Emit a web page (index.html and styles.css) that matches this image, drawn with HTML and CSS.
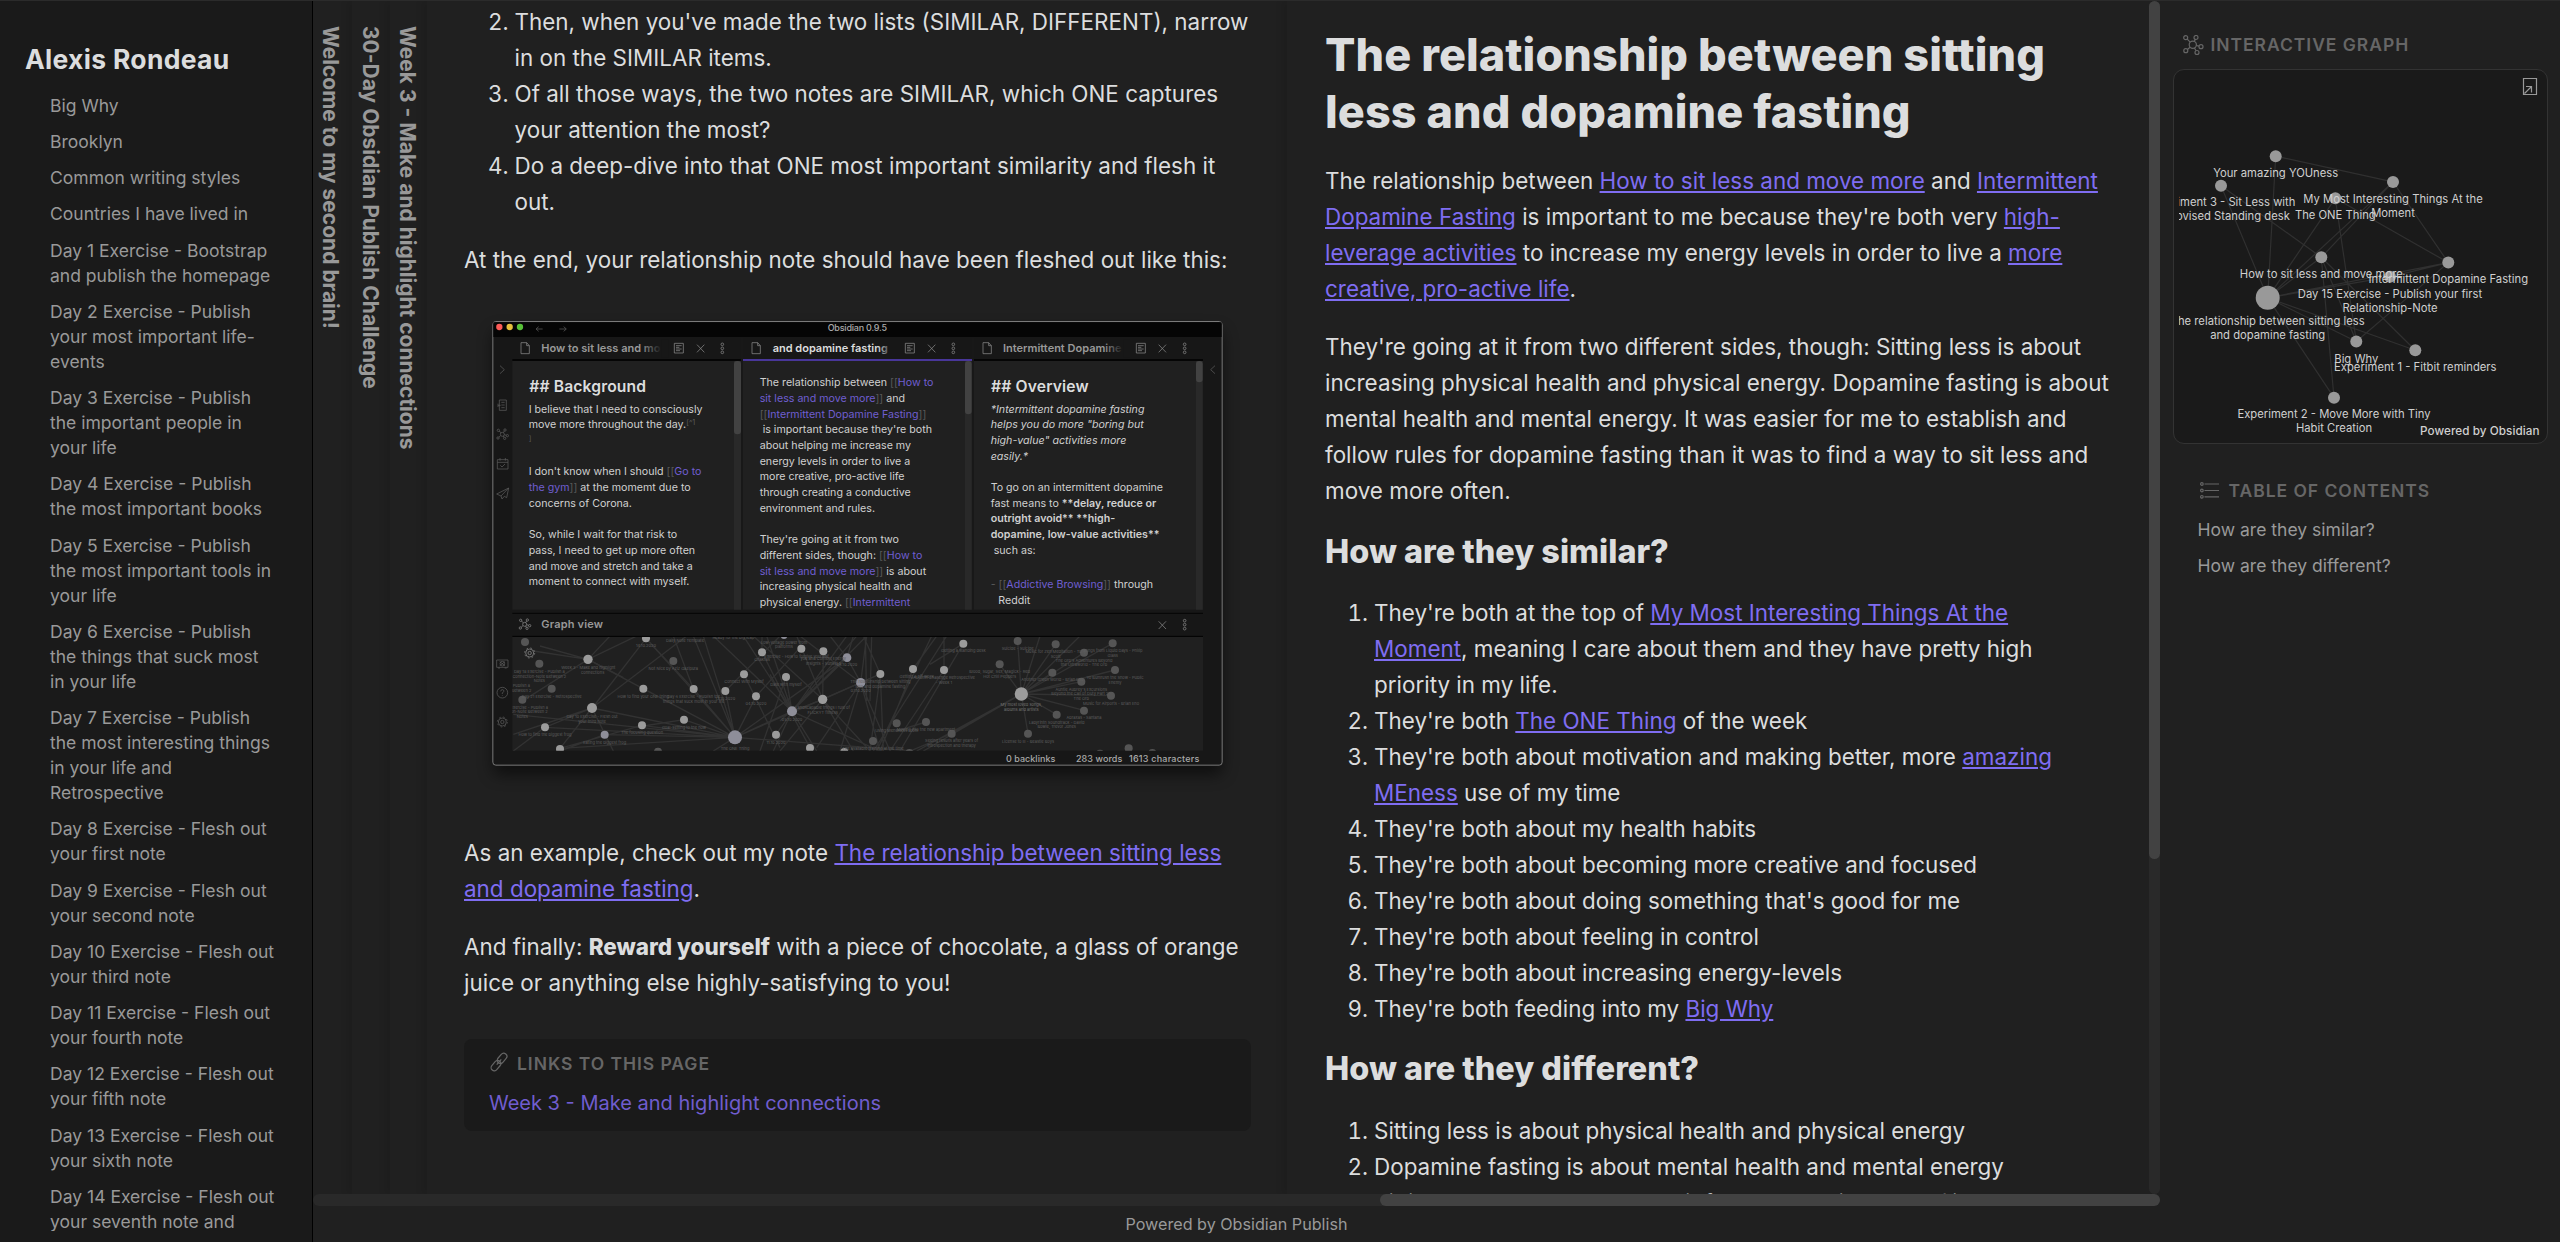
FILE: index.html
```html
<!DOCTYPE html>
<html lang="en">
<head>
<meta charset="utf-8">
<title>Alexis Rondeau</title>
<link rel="stylesheet" href="styles.css">
</head>
<body>
<div class="app">
  <aside class="sidebar">
    <h2 class="site-title">Alexis Rondeau</h2>
    <nav class="nav">
      <a>Big Why</a>
      <a>Brooklyn</a>
      <a>Common writing styles</a>
      <a>Countries I have lived in</a>
      <a>Day 1 Exercise - Bootstrap and publish the homepage</a>
      <a>Day 2 Exercise - Publish your most important life-events</a>
      <a>Day 3 Exercise - Publish the important people in your life</a>
      <a>Day 4 Exercise - Publish the most important books</a>
      <a>Day 5 Exercise - Publish the most important tools in your life</a>
      <a>Day 6 Exercise - Publish the things that suck most in your life</a>
      <a>Day 7 Exercise - Publish the most interesting things in your life and Retrospective</a>
      <a>Day 8 Exercise - Flesh out your first note</a>
      <a>Day 9 Exercise - Flesh out your second note</a>
      <a>Day 10 Exercise - Flesh out your third note</a>
      <a>Day 11 Exercise - Flesh out your fourth note</a>
      <a>Day 12 Exercise - Flesh out your fifth note</a>
      <a>Day 13 Exercise - Flesh out your sixth note</a>
      <a>Day 14 Exercise - Flesh out your seventh note and</a>
    </nav>
  </aside>

  <main class="center">
    <div class="panes">
      <section class="stacked first"><span>Welcome to my second brain!</span></section>
      <section class="stacked"><span>30-Day Obsidian Publish Challenge</span></section>
      <section class="stacked"><span>Week 3 - Make and highlight connections</span></section>

      <article class="note note-exercise">
        <ol start="2">
          <li>Then, when you've made the two lists (SIMILAR, DIFFERENT), narrow in on the SIMILAR items.</li>
          <li>Of all those ways, the two notes are SIMILAR, which ONE captures your attention the most?</li>
          <li>Do a deep-dive into that ONE most important similarity and flesh it out.</li>
        </ol>
        <p>At the end, your relationship note should have been fleshed out like this:</p>
        <figure class="shot">
          <svg viewBox="-48 0 2364 1536">
            <defs>
              <clipPath id="graphClip"><rect x="97" y="1008" width="2072" height="341"/></clipPath>
              <clipPath id="noteClip"><rect x="97" y="180" width="2072" height="746"/></clipPath>
              <linearGradient id="fadeTab"><stop offset="0" stop-color="#171717" stop-opacity="0"/><stop offset="1" stop-color="#171717"/></linearGradient>
              <filter id="soft" x="-10%" y="-10%" width="120%" height="125%"><feGaussianBlur stdDeviation="24"/></filter>
            </defs>
            <rect x="40" y="90" width="2186" height="1330" rx="14" fill="#000" opacity=".55" filter="url(#soft)"/>
            <rect x="38.500" y="61.500" width="2188" height="1331" rx="9" fill="#171717" stroke="#7a7a7a" stroke-width="3"/>
            <rect x="40" y="64" width="2185" height="44" fill="#050505"/>
            <circle cx="58" cy="78" r="9.500" fill="#fc5b57"/><circle cx="89" cy="78" r="9.500" fill="#e5bf3c"/><circle cx="120" cy="78" r="9.500" fill="#57c038"/>
            <g class="line dim"><path d="M188 84H169M176 77l-8 7 8 7M238 84h20M251 77l8 7-8 7"/></g>
            <text class="t mid" x="1043" y="91" font-size="26" textLength="178">Obsidian 0.9.5</text>

            <rect x="97" y="180" width="2072" height="746" fill="#202020"/>
            <path d="M97 177H783M1482 177H2169" stroke="#000" stroke-width="5"/>
            <path d="M789 177H1476" stroke="#483699" stroke-width="6"/>
            <path d="M786 110V928M1479 110V928" stroke="#181818" stroke-width="6"/>
            <rect x="762" y="180" width="21" height="746" fill="#292929"/><rect x="762" y="180" width="21" height="220" rx="10" fill="#424242"/>
            <rect x="1455" y="180" width="20" height="746" fill="#292929"/><rect x="1455" y="180" width="20" height="160" rx="10" fill="#424242"/>
            <rect x="2148" y="180" width="20" height="746" fill="#292929"/><rect x="2148" y="180" width="20" height="64" rx="10" fill="#424242"/>

            <g class="line">
              <path d="M123 125h17l8 9v24h-25zM140 125v9h8M816 125h17l8 9v24h-25zM833 125v9h8M1509 125h17l8 9v24h-25zM1526 125v9h8"/>
              <path d="M583 127h27v29h-27zM588 134h17M588 139h10M588 144h17M588 149h12M1276 127h27v29h-27zM1281 134h17M1281 139h10M1281 144h17M1281 149h12M1969 127h27v29h-27zM1974 134h17M1974 139h10M1974 144h17M1974 149h12"/>
              <path d="M651 131l22 23M673 131l-22 23M1344 131l22 23M1366 131l-22 23M2036 131l22 23M2058 131l-22 23M2036 961l22 23M2058 961l-22 23"/>
              <g id="dots"><circle cx="727" cy="130" r="4"/><circle cx="727" cy="142" r="4"/><circle cx="727" cy="154" r="4"/></g>
              <use href="#dots" x="693"/><use href="#dots" x="1387"/><use href="#dots" x="1387" y="829"/>
            </g>
            <text class="t tab" x="184" y="153">How to sit less and mo</text>
            <text class="t tab on" x="878" y="153">and dopamine fasting</text>
            <text class="t tab" x="1569" y="153">Intermittent Dopamine</text>
            <rect x="480" y="115" width="65" height="55" fill="url(#fadeTab)"/><rect x="545" y="115" width="20" height="55" fill="#171717"/>
            <rect x="1190" y="115" width="50" height="55" fill="url(#fadeTab)"/>
            <rect x="1870" y="115" width="60" height="55" fill="url(#fadeTab)"/><rect x="1930" y="115" width="20" height="55" fill="#171717"/>

            <g class="line dim">
              <path d="M60 194l13 12-13 12M2205 194l-13 12 13 12"/>
              <path d="M58 297h21v31H58zM64 304h10M64 312h10M64 320h10M54 308v10M54 313h8"/>
              <path d="M52 476h32v28H52zM52 484h32M60 471v8M76 471v8M61 493l5 5 9-9"/>
              <path d="M86 561L50 579l13 6 3 9 7-8 7 4zM86 561L63 585"/>
              <path d="M50 1077h34v22H50zM54 1101h6M74 1101h6M59 1082l16 12M75 1082l-16 12"/><circle cx="67" cy="1088" r="7"/>
              <circle cx="67" cy="1175" r="16"/><path d="M62 1171q1-6 6-5 6 2 3 6l-4 4v3M67 1182v2"/>
              <g id="gear"><circle cx="67" cy="1263" r="5"/><circle cx="67" cy="1263" r="12"/><circle cx="67" cy="1263" r="15" stroke-dasharray="5 6.800"/></g>
              <g id="net"><circle cx="67" cy="400" r="6"/><circle cx="55" cy="388" r="3.500"/><circle cx="75" cy="387" r="3.500"/><circle cx="82" cy="404" r="3.500"/><circle cx="54" cy="411" r="3.500"/><circle cx="74" cy="412" r="3.500"/><path d="M57 390l6 5M73 390l-3 5M73 401l6 2M57 408l5-4M70 405l2 4"/></g>
            </g>

            <g class="t" clip-path="url(#noteClip)">
              <text class="head" x="148" y="273" textLength="350">## Background</text>
              <text x="146" y="335">I believe that I need to consciously</text>
              <text x="146" y="382">move more throughout the day.<tspan class="br" font-size="22" dy="-10">[^1</tspan></text>
              <text class="br" x="146" y="420" font-size="22">]</text>
              <text x="146" y="523">I don't know when I should <tspan class="br">[[</tspan><tspan class="lk">Go to</tspan></text>
              <text x="146" y="570"><tspan class="lk">the gym</tspan><tspan class="br">]]</tspan> at the momemt due to</text>
              <text x="146" y="617">concerns of Corona.</text>
              <text x="146" y="711">So, while I wait for that risk to</text>
              <text x="146" y="759">pass, I need to get up more often</text>
              <text x="146" y="806">and move and stretch and take a</text>
              <text x="146" y="853">moment to connect with myself.</text>

              <text x="839" y="255">The relationship between <tspan class="br">[[</tspan><tspan class="lk">How to</tspan></text>
              <text x="839" y="303"><tspan class="lk">sit less and move more</tspan><tspan class="br">]]</tspan> and</text>
              <text x="839" y="350"><tspan class="br">[[</tspan><tspan class="lk">Intermittent Dopamine Fasting</tspan><tspan class="br">]]</tspan></text>
              <text x="848" y="397">is important because they're both</text>
              <text x="839" y="444">about helping me increase my</text>
              <text x="839" y="491">energy levels in order to live a</text>
              <text x="839" y="538">more creative, pro-active life</text>
              <text x="839" y="585">through creating a conductive</text>
              <text x="839" y="633">environment and rules.</text>
              <text x="839" y="727">They're going at it from two</text>
              <text x="839" y="774">different sides, though: <tspan class="br">[[</tspan><tspan class="lk">How to</tspan></text>
              <text x="839" y="821"><tspan class="lk">sit less and move more</tspan><tspan class="br">]]</tspan> is about</text>
              <text x="839" y="868">increasing physical health and</text>
              <text x="839" y="915">physical energy. <tspan class="br">[[</tspan><tspan class="lk">Intermittent</tspan></text>

              <text class="head" x="1533" y="273" textLength="293">## Overview</text>
              <g font-style="italic">
                <text x="1532" y="335">*Intermittent dopamine fasting</text>
                <text x="1532" y="382">helps you do more "boring but</text>
                <text x="1532" y="429">high-value" activities more</text>
                <text x="1532" y="476">easily.*</text>
              </g>
              <text x="1532" y="570">To go on an intermittent dopamine</text>
              <text x="1532" y="617">fast means to <tspan font-weight="600">**delay, reduce or</tspan></text>
              <text x="1532" y="664" font-weight="600">outright avoid** **high-</text>
              <text x="1532" y="711" font-weight="600">dopamine, low-value activities**</text>
              <text x="1541" y="759">such as:</text>
              <text x="1532" y="862"><tspan class="br">- [[</tspan><tspan class="lk">Addictive Browsing</tspan><tspan class="br">]]</tspan> through</text>
              <text x="1555" y="909">Reddit</text>
            </g>

            <path d="M97 937H2169" stroke="#050505" stroke-width="3"/>
            <g class="line"><use href="#net" x="67" y="570"/></g>
            <text class="t tab" x="184" y="981" textLength="185">Graph view</text>
            <rect x="97" y="1006" width="2072" height="343" fill="#202020"/>
            <path d="M97 1006H2169" stroke="#000" stroke-width="3"/>

            <g clip-path="url(#graphClip)">
              <g stroke="#323232" stroke-width="4" fill="none">
                <path d="M765 1309L324 1075M765 1309L336 1221M765 1309L195 1279M765 1309L374 1301M765 1309L486 1273M765 1309L612 1256M765 1309L490 1163M765 1309L641 1164M765 1309L736 1170M765 1309L828 1186M765 1309L936 1231M765 1309L1142 1145M765 1309L1101 1070M765 1309L1028 1195M765 1309L240 1342M765 1309L100 1240M765 1309L498 1012M765 1309L1300 1350M765 1309L700 1350M765 1309L640 1005M765 1309L670 1005"/>
                <path d="M324 1075L180 1035M324 1075L160 1050M324 1075L120 1205M324 1075L390 1005M324 1075L470 1005M324 1075L430 1130M498 1012L330 1230M498 1012L640 1164M336 1221L620 1005M336 1221L100 1300M336 1221L240 1342M336 1221L400 1350M195 1279L100 1350M195 1279L336 1221M374 1301L240 1350M486 1273L240 1342M612 1256L490 1275"/>
                <path d="M936 1231L700 1005M936 1231L790 1005M936 1231L860 1005M936 1231L880 1350M936 1231L1010 1350M936 1231L1130 1005M936 1231L1160 1005M936 1231L1101 1070M936 1231L1028 1195M936 1231L846 1054M936 1231L918 1128M936 1231L1200 1350M1028 1195L820 1005M1028 1195L950 1005M1028 1195L1142 1145M1028 1195L1200 1119M1028 1195L900 1350M1028 1195L1120 1350M1028 1195L1170 1350"/>
                <path d="M1142 1145L960 1005M1142 1145L1101 1070L1050 1005M1142 1145L1201 1119M1142 1145L1200 1350M1142 1145L1080 1350M1142 1145L1160 1005M1142 1145L1230 1350M1142 1145L1010 1340M1101 1070L1120 1005M1101 1070L900 1260M1201 1119L1150 1005M1201 1119L1170 1350M1201 1119L1210 1350M1299 1104L1200 1350M1299 1104L1370 1005M1392 1107V1005M1392 1107L1230 1350M1450 1028L1260 1350M1450 1028L1350 1090M1355 1005L1190 1350M1400 1005L1180 1350M846 1054V1005M918 1128L840 1350M640 1164L580 1005M736 1170L900 1005M792 1120L900 1340M828 1186L960 1040M1028 1195L1030 1050M888 1300L1100 1005M990 1340L870 1120M1160 1200L1156 1005M1170 1200L1175 1005"/>
                <path d="M1624 1179L1613 1020M1624 1179L1559 1090M1624 1179L1727 1030M1624 1179L1680 1005M1624 1179L1800 1005M1624 1179L1812 1055M1624 1179L1898 1027M1624 1179L1905 1107M1624 1179L1717 1115M1624 1179L1804 1142M1624 1179L1893 1184M1624 1179L1812 1228M1624 1179L1730 1241M1624 1179L1644 1298M1624 1179L1415 1298M1624 1179L1330 1350M1624 1179L1310 1350M1415 1298L1290 1350M1338 1263L1250 1290"/>
              </g>
              <g fill="#555">
                <circle cx="135" cy="1023" r="12"/><circle cx="580" cy="1080" r="12"/><circle cx="215" cy="1163" r="12"/><circle cx="127" cy="1196" r="12"/><circle cx="178" cy="1088" r="12"/><circle cx="534" cy="1352" r="12"/><circle cx="1613" cy="1020" r="12"/><circle cx="1559" cy="1090" r="12"/><circle cx="1727" cy="1030" r="12"/><circle cx="1812" cy="1055" r="12"/><circle cx="1898" cy="1027" r="12"/><circle cx="1717" cy="1115" r="12"/><circle cx="1905" cy="1107" r="12"/><circle cx="1804" cy="1142" r="12"/><circle cx="1893" cy="1184" r="12"/><circle cx="1812" cy="1229" r="12"/><circle cx="1730" cy="1241" r="12"/><circle cx="1644" cy="1298" r="12"/><circle cx="1250" cy="1267" r="12"/><circle cx="1338" cy="1263" r="12"/><circle cx="1415" cy="1298" r="12"/><circle cx="1179" cy="1320" r="12"/><circle cx="1946" cy="1342" r="12"/><circle cx="2017" cy="1356" r="12"/><circle cx="1860" cy="1358" r="12"/><circle cx="1288" cy="1356" r="12"/>
              </g>
              <g fill="#9b9b9b">
                <circle cx="498" cy="1012" r="12"/><circle cx="324" cy="1075" r="14"/><circle cx="490" cy="1163" r="12"/><circle cx="641" cy="1164" r="12"/><circle cx="736" cy="1170" r="12"/><circle cx="792" cy="1120" r="12"/><circle cx="828" cy="1186" r="12"/><circle cx="918" cy="1128" r="12"/><circle cx="846" cy="1054" r="12"/><circle cx="964" cy="1043" r="12"/><circle cx="1030" cy="1051" r="12"/><circle cx="336" cy="1221" r="15"/><circle cx="195" cy="1279" r="12"/><circle cx="486" cy="1273" r="12"/><circle cx="612" cy="1256" r="12"/><circle cx="240" cy="1344" r="12"/><circle cx="1028" cy="1195" r="14"/><circle cx="888" cy="1301" r="12"/><circle cx="990" cy="1341" r="12"/><circle cx="1093" cy="1353" r="12"/><circle cx="1201" cy="1119" r="12"/><circle cx="1299" cy="1104" r="12"/><circle cx="1392" cy="1107" r="12"/><circle cx="1450" cy="1028" r="12"/><circle cx="1624" cy="1179" r="20"/>
              </g>
              <g fill="#8e8e99"><circle cx="765" cy="1309" r="21"/><circle cx="936" cy="1231" r="15"/><circle cx="1142" cy="1145" r="14"/><circle cx="1101" cy="1070" r="13"/><circle cx="374" cy="1301" r="12"/><circle cx="912" cy="1004" r="10"/></g>
              <g class="tiny">
                <text x="498" y="1038">14.10.2020</text><text x="615" y="1023">Daily Note Template</text><text x="760" y="1013">Ready for the big leap</text>
                <text x="325" y="1105">Week 3 - Make and highlight</text><text x="338" y="1119">connections</text>
                <text x="580" y="1107">Not Nice by Aziz Gazipura</text>
                <text x="178" y="1116">Day 18 Exercise - Publish a</text><text x="178" y="1130">Connection-Note Between 2</text><text x="178" y="1144">Notes</text>
                <text x="215" y="1190">Day 21 Exercise - Retrospective</text>
                <text x="148" y="1223">Exercise - Publish a</text><text x="148" y="1237">on-Note Between 2</text><text x="127" y="1251">Notes</text>
                <text x="124" y="1158">Publish a</text><text x="124" y="1172">Between 2</text>
                <text x="490" y="1190">How to find your ONE thing</text><text x="641" y="1190">Day 6 Exercise - Publish the</text><text x="641" y="1205">things that suck most in your life</text>
                <text x="736" y="1196">13.10.2020</text><text x="792" y="1146">Connect With Myself</text><text x="828" y="1213">04.10.2020</text><text x="918" y="1154">Date with myself</text>
                <text x="846" y="1080">Chakras</text><text x="912" y="1028">Low-voltage power from</text><text x="912" y="1042">platforms</text>
                <text x="950" y="1070">Exercise - How to forgive yourself</text><text x="1030" y="1077">you and Content Energy</text><text x="1030" y="1091">Insights - Sunset 1</text><text x="1101" y="1096">06.10.2020</text>
                <text x="336" y="1251">Day 10 Exercise - Flesh out</text><text x="336" y="1265">your third note</text><text x="195" y="1306">How to find the biggest frog</text><text x="374" y="1328">Eating the biggest frog</text>
                <text x="486" y="1299">The focusing question</text><text x="612" y="1283">Goal-setting to the now</text><text x="765" y="1347">The ONE Thing</text>
                <text x="936" y="1260">05.10.2020</text><text x="1028" y="1225">Landscapable things I rule of</text><text x="1028" y="1239">FLICKYT fitness</text><text x="888" y="1328">11.10.2020</text>
                <text x="1201" y="1145">The relationship between sitting</text><text x="1201" y="1160">less and dopamine fasting</text><text x="1142" y="1172">07.10.2020</text>
                <text x="1310" y="1131">Getting a 2ff week</text><text x="1392" y="1134">Autumn Challenge Retrospective</text><text x="1392" y="1148">- Week 1</text><text x="1450" y="1054">Getting a standing desk</text>
                <text x="1250" y="1293">Using MeneNess room</text><text x="1338" y="1290">Moving into the new apartment</text><text x="1415" y="1324">Seeing results after years of</text><text x="1415" y="1338">introspection and therapy</text><text x="1179" y="1346">The available training at the time</text>
                <text x="1613" y="1046">Suicide - Suicide</text><text x="1727" y="1056">Music for Zen Meditation - Tony</text><text x="1727" y="1070">Scott</text><text x="1898" y="1054">Songs from Liquid Days - Philip</text><text x="1898" y="1068">Glass</text>
                <text x="1812" y="1082">The Orb's Adventures Beyond</text><text x="1812" y="1095">the Ultraworld - The Orb</text><text x="1559" y="1116">Blood, Sugar, Sex, Magick - Red</text><text x="1559" y="1131">Hot Chili Peppers</text>
                <text x="1717" y="1141">Another Green World - Brian Eno</text><text x="1905" y="1134">Yo Bumrush the Show - Public</text><text x="1905" y="1148">Enemy</text>
                <text x="1804" y="1169">Auntie Aubrey's Excursions</text><text x="1804" y="1183">Beyond the Call of Duty Part 2 -</text><text x="1804" y="1197">The Orb</text><text x="1893" y="1211">Music for Airports - Brian Eno</text>
                <text x="1624" y="1215" fill="#777">My most loved songs,</text><text x="1624" y="1231" fill="#777">albums and artists</text><text x="1812" y="1255">Abraxas - Santana</text>
                <text x="1730" y="1268">Labyrinth Soundtrack - David</text><text x="1730" y="1282">Bowie, Trevor Jones</text><text x="1644" y="1325">License to Ill - Beastie Boys</text>
              </g>
              <g class="line"><use href="#gear" x="82" y="-207"/></g>
            </g>
            <g class="t mid" font-size="27">
              <text x="1578" y="1383" textLength="148">0 backlinks</text><text x="1788" y="1383" textLength="139">283 words</text><text x="1947" y="1383" textLength="211">1613 characters</text>
            </g>
          </svg>
        </figure>
        <p>As an example, check out my note <a>The relationship between sitting less and dopamine fasting</a>.</p>
        <p>And finally: <strong>Reward yourself</strong> with a piece of chocolate, a glass of orange juice or anything else highly-satisfying to you!</p>
        <section class="backlinks">
          <h4 class="label">
            <svg class="ico-link" viewBox="0 0 20 20"><g transform="rotate(-50 10 10)"><rect x="-.5" y="6.800" width="11.500" height="6.400" rx="3.200"/><rect x="9" y="6.800" width="11.500" height="6.400" rx="3.200"/><path d="M6.500 10h7"/></g></svg>
            LINKS TO THIS PAGE
          </h4>
          <a>Week 3 - Make and highlight connections</a>
        </section>
      </article>

      <article class="note note-relation">
        <h1>The relationship between sitting less and dopamine fasting</h1>
        <p>The relationship between <a>How to sit less and move more</a> and <a>Intermittent Dopamine Fasting</a> is important to me because they're both very <a>high-leverage activities</a> to increase my energy levels in order to live a <a>more creative, pro-active life</a>.</p>
        <p>They're going at it from two different sides, though: Sitting less is about increasing physical health and physical energy. Dopamine fasting is about mental health and mental energy. It was easier for me to establish and follow rules for dopamine fasting than it was to find a way to sit less and move more often.</p>
        <h2>How are they similar?</h2>
        <ol>
          <li>They're both at the top of <a>My Most Interesting Things At the Moment</a>, meaning I care about them and they have pretty high priority in my life.</li>
          <li>They're both <a>The ONE Thing</a> of the week</li>
          <li>They're both about motivation and making better, more <a>amazing MEness</a> use of my time</li>
          <li>They're both about my health habits</li>
          <li>They're both about becoming more creative and focused</li>
          <li>They're both about doing something that's good for me</li>
          <li>They're both about feeling in control</li>
          <li>They're both about increasing energy-levels</li>
          <li>They're both feeding into my <a>Big Why</a></li>
        </ol>
        <h2>How are they different?</h2>
        <ol>
          <li>Sitting less is about physical health and physical energy</li>
          <li>Dopamine fasting is about mental health and mental energy</li>
          <li>Sitting less needs to be a habit from the environment (like</li>
        </ol>
      </article>
      <div class="vscroll"><i></i></div>
    </div>
    <div class="hscroll"><i></i></div>
    <footer class="footer">Powered by Obsidian Publish</footer>
  </main>

  <aside class="right">
    <h4 class="label graph-label">
      <svg class="ico-net" viewBox="0 0 21 21"><circle cx="9.800" cy="9.800" r="3.600"/><circle cx="2.700" cy="2.700" r="2"/><circle cx="13" cy="2.500" r="2"/><circle cx="18" cy="11.700" r="2"/><circle cx="2.800" cy="15.700" r="2"/><circle cx="14" cy="17.500" r="2"/><path d="M4.200 4.100l3 3M12.300 4.400l-1.100 2.200M13.300 10.500l2.700.7M4.400 14.500l2.600-2.300M11.400 13l1.700 2.700"/></svg>
      INTERACTIVE GRAPH
    </h4>
    <div class="graph">
      <svg viewBox="2174 69.500 373 373">
        <defs><clipPath id="labels"><rect x="2179" y="70" width="364" height="372"/></clipPath></defs>
        <path class="edges" d="M2275.700 155.700L2393 181.400M2275.700 155.700L2267.700 297.300M2221 185.200L2267.700 297.300M2221 185.200L2321.300 256.800M2393 181.400L2267.700 297.300M2393 181.400L2321.300 256.800M2393 181.400L2448.300 262.100M2335.300 197.800L2267.700 297.300M2335.300 197.800L2448.300 262.100M2335.300 197.800L2356.300 341M2321.300 256.800L2267.700 297.300M2321.300 256.800L2356.300 341M2321.300 256.800L2415.300 349.800M2321.300 256.800L2334 397.200M2267.700 297.300L2448.300 262.100M2267.700 297.300L2390 276.300M2267.700 297.300L2356.300 341M2267.700 297.300L2415.300 349.800M2267.700 297.300L2334 397.200M2448.300 262.100L2356.300 341M2390 276.300L2448.300 262.100"/>
        <g fill="#999"><circle cx="2275.700" cy="155.700" r="6"/><circle cx="2221" cy="185.200" r="6"/><circle cx="2393" cy="181.400" r="6"/><circle cx="2335.300" cy="197.800" r="6"/><circle cx="2321.300" cy="256.800" r="6"/><circle cx="2448.300" cy="262.100" r="6"/><circle cx="2390" cy="276.300" r="6"/><circle cx="2267.700" cy="297.300" r="12"/><circle cx="2356.300" cy="341" r="6"/><circle cx="2415.300" cy="349.800" r="6"/><circle cx="2334" cy="397.200" r="6"/></g>
        <g class="names" clip-path="url(#labels)">
          <text x="2275.700" y="176">Your amazing YOUness</text>
          <text x="2221" y="205.500">Experiment 3 - Sit Less with</text><text x="2221" y="219.800">Improvised Standing desk</text>
          <text x="2393" y="202">My Most Interesting Things At the</text><text x="2393" y="216.300">Moment</text>
          <text x="2335.300" y="218">The ONE Thing</text>
          <text x="2321.300" y="277.500">How to sit less and move more</text>
          <text x="2448.300" y="282.600">Intermittent Dopamine Fasting</text>
          <text x="2390" y="297">Day 15 Exercise - Publish your first</text><text x="2390" y="311.300">Relationship-Note</text>
          <text x="2267.700" y="324">The relationship between sitting less</text><text x="2267.700" y="338.200">and dopamine fasting</text>
          <text x="2356.300" y="362">Big Why</text>
          <text x="2415.300" y="370">Experiment 1 - Fitbit reminders</text>
          <text x="2334" y="417.500">Experiment 2 - Move More with Tiny</text><text x="2334" y="431.800">Habit Creation</text>
        </g>
        <text class="powered" x="2420" y="434" textLength="119.500">Powered by Obsidian</text>
        <path class="expand" d="M2523.500 78h13v16h-13zM2524.500 93l7-7M2526 86h5.500v6"/>
      </svg>
    </div>
    <h4 class="label toc-label">
      <svg class="ico-toc" viewBox="0 0 20 18"><circle cx="1.900" cy="2" r="1.300"/><circle cx="1.900" cy="8.500" r="1.300"/><circle cx="1.900" cy="14.800" r="1.300"/><path d="M4.500 2H19M4.500 8.500H19M4.500 14.800H19"/></svg>
      TABLE OF CONTENTS
    </h4>
    <nav class="toc"><a>How are they similar?</a><a>How are they different?</a></nav>
  </aside>
</div>
</body>
</html>
```
FILE: styles.css
```css
* { box-sizing: border-box; }
html, body { margin: 0; height: 100%; }
body {
  background: #202020;
  color: #dcddde;
  font-family: Inter, "Open Sans", sans-serif;
  font-size: 22.45px;
  line-height: 36px;
  overflow: hidden;
}
.app {
  display: grid;
  grid-template-columns: 313px 1847px 1fr;
  height: 1242px;
  border-top: 1px solid #2b2b2b;
}

/* left navigation */
.sidebar {
  display: flex;
  flex-direction: column;
  background: #1a1a1a;
  border-right: 1px solid #000;
  padding: 40px 0 11px 25px;
  min-height: 0;
}
.site-title {
  margin: 0 0 15.5px;
  font-size: 26.5px;
  font-weight: 700;
  letter-spacing: 0.3px;
  line-height: 36px;
}
.nav {
  display: flex;
  flex-direction: column;
  flex: 1;
  gap: 11.25px;
  min-height: 0;
  overflow: hidden;
  width: 252px;
  padding-left: 25px;
  font-size: 17.55px;
  line-height: 25px;
  color: #999;
}
.nav a { flex: none; }

/* sliding panes */
.center {
  display: grid;
  grid-template-rows: 1193px 12px 1fr;
  min-height: 0;
}
.panes { display: flex; overflow: hidden; }
.stacked, .note { flex: none; background: #202020; }
.stacked + .stacked, .note { box-shadow: -6px 0 6px rgba(0, 0, 0, .08); }
.stacked {
  width: 37.5px;
  padding-top: 25px;
  color: #999;
  font-size: 21px;
  font-weight: 700;
}
.stacked.first { width: 39px; }
.stacked span {
  display: block;
  writing-mode: vertical-rl;
  line-height: 34.7px;
  white-space: nowrap;
}
.stacked.first span { line-height: 34px; }
.note { width: 860px; padding: 0 35px 0 37px; overflow: hidden; }
.note-relation { width: 862px; padding-left: 38px; padding-right: 36px; }
.note-exercise { padding-top: 2.5px; }
.note-relation { padding-top: 25px; }
.note p, .note ol { margin: 0 0 22.5px; }
.note ol { padding-left: 50.5px; }
.note-relation ol { padding-left: 49px; padding-right: 12px; }
.note a { color: #7f6df2; text-decoration: underline; }
.note strong { font-weight: 800; }
.note h1 {
  margin: 0 0 22.5px;
  font-size: 45px;
  font-weight: 800;
  letter-spacing: .07px;
  line-height: 57px;
}
.note h2 {
  margin: 0 0 23.3px;
  font-size: 32.4px;
  font-weight: 800;
  line-height: 40px;
}
.shot { margin: 0 0 22.5px; height: 511.5px; }
.shot svg { display: block; width: 788px; height: 512px; }

.backlinks {
  width: 787px;
  height: 92px;
  margin-top: 38px;
  padding: 7px 25px;
  background: #1a1a1a;
  border-radius: 8px;
}
.note .backlinks a {
  display: block;
  margin-top: 3px;
  color: #705dcf;
  font-size: 20px;
  text-decoration: none;
}
.label {
  display: flex;
  align-items: center;
  margin: 0;
  color: #666;
  font-size: 17.5px;
  font-weight: 600;
  letter-spacing: .96px;
  line-height: 36px;
}
.label svg, .line, .expand { fill: none; stroke: #666; stroke-width: 1.2; }
.ico-link { width: 20px; height: 20px; margin: -4px 8px 0 0; }

/* scrollbars */
.vscroll { flex: none; width: 11px; background: #292929; border-radius: 6px; }
.vscroll i { display: block; height: 858px; background: #424242; border-radius: 6px; }
.hscroll { display: flex; justify-content: flex-end; background: #292929; border-radius: 6px; }
.hscroll i { width: 780px; background: #424242; border-radius: 6px; }
.footer {
  display: flex;
  align-items: center;
  justify-content: center;
  color: #999;
  font-size: 16.15px;
  line-height: 20px;
}

/* right column */
.right { padding: 26px 12px 0 13px; }
.graph-label { padding-left: 10px; }
.ico-net { width: 21px; height: 21px; margin-right: 6.5px; }
.graph {
  width: 375px;
  height: 375px;
  margin-top: 5.5px;
  background: #1a1a1a;
  border: 1px solid #333;
  border-radius: 11px;
}
.graph svg { display: block; width: 373px; height: 373px; }
.edges { fill: none; stroke: #303030; stroke-width: 1.2; }
.names { fill: #d0d0d0; font-size: 11.25px; text-anchor: middle; }
.powered { fill: #d0d0d0; font-size: 11.7px; font-weight: 500; }
.expand { stroke: #999; }
.toc-label { margin-top: 29px; padding-left: 27px; }
.ico-toc { width: 20px; height: 18px; margin-right: 8.5px; }
.toc {
  display: flex;
  flex-direction: column;
  margin-top: 3px;
  padding-left: 24.5px;
  color: #999;
  font-size: 17.55px;
}

/* embedded screenshot drawing */
.line { stroke: #8a8a8a; stroke-width: 2.2; }
.line.dim { stroke: #5c5c5c; }
.t { fill: #d0d0d0; font-size: 32px; }
.t.tab { fill: #999; font-size: 33px; font-weight: 600; }
.t.on { fill: #dcddde; }
.t.mid { fill: #aaa; font-size: 27px; font-weight: 500; }
.head { font-size: 47px; font-weight: 600; fill: #dcddde; }
.lk { fill: #6f5ed0; }
.br { fill: #5a5a5a; }
.tiny { fill: #5f5f5f; font-size: 12px; text-anchor: middle; }
```
